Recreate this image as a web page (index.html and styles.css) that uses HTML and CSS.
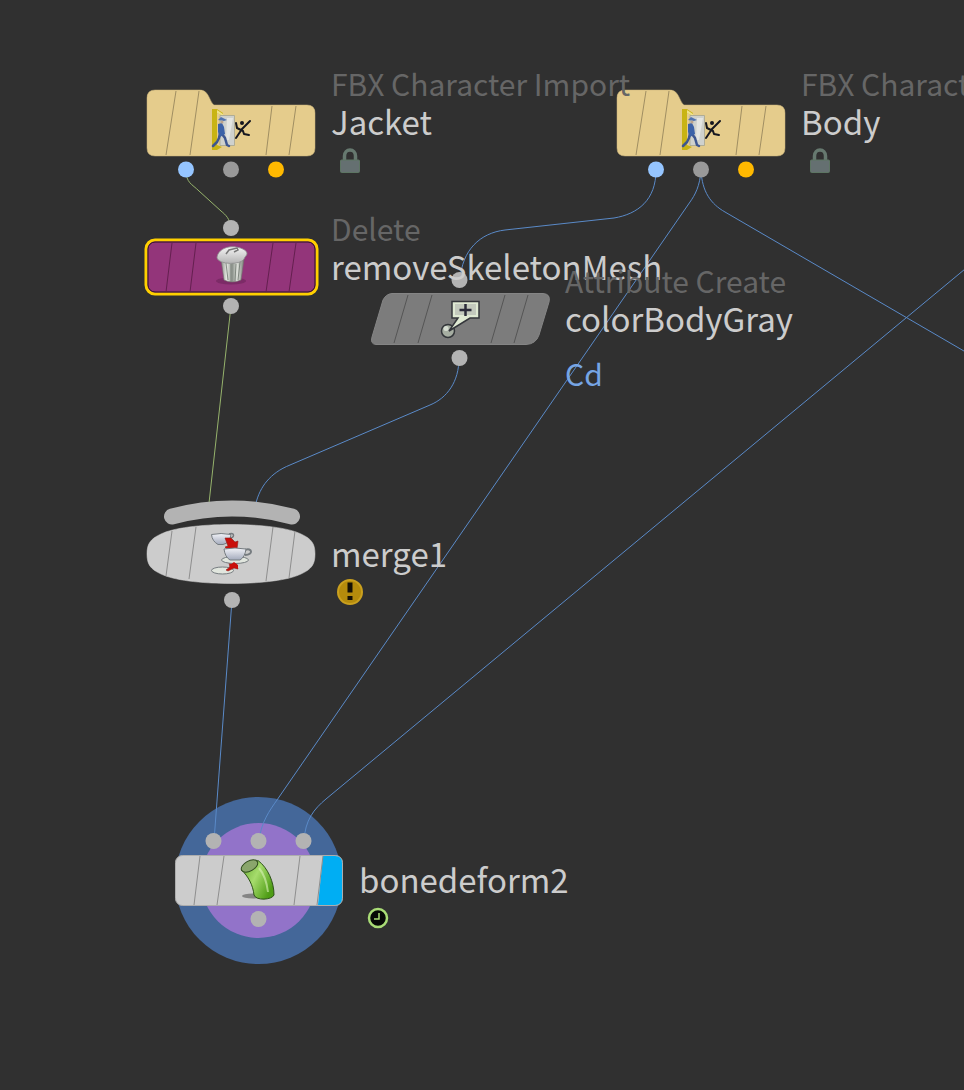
FILE: index.html
```html
<!DOCTYPE html>
<html lang="en">
<head>
    <meta charset="UTF-8">
    <meta name="viewport" content="width=device-width, initial-scale=1.0">
    <title>Network Editor</title>
    <link rel="stylesheet" href="styles.css">
</head>
<body>
    <!-- shared shapes -->
    <svg class="defs" aria-hidden="true">
        <defs>
            <linearGradient id="metal">
                <stop offset="0" stop-color="#8c918a"/>
                <stop offset=".25" stop-color="#e6e9e3"/>
                <stop offset=".5" stop-color="#8f958e"/>
                <stop offset=".7" stop-color="#dfe2dc"/>
                <stop offset="1" stop-color="#7a8078"/>
            </linearGradient>
            <linearGradient id="lid" x2="0" y2="1">
                <stop offset="0" stop-color="#f4f4f4"/>
                <stop offset="1" stop-color="#b4b4b4"/>
            </linearGradient>
            <linearGradient id="cup" x2="0" y2="1">
                <stop offset="0" stop-color="#f2f3f8"/>
                <stop offset="1" stop-color="#a3aabc"/>
            </linearGradient>
            <linearGradient id="tube" x2="1" y2=".6">
                <stop offset="0" stop-color="#63a82c"/>
                <stop offset=".5" stop-color="#a6dc6c"/>
                <stop offset="1" stop-color="#4f9d16"/>
            </linearGradient>
            <symbol id="fbxNode" viewBox="0 0 172 116">
                <path fill="#e5cc8c" stroke="#c9b27a" stroke-width=".5" d="M2 32Q2 24 10 24H55C64 24 64 35 69 39H162Q170 39 170 47V82Q170 90 162 90H10Q2 90 2 82Z"/>
                <path class="stripe tan" d="M31 25L21 89M54 25L45 89M127 40L121 89M151 40L144 89"/>
                <path fill="#c9b414" d="M67 43h5l6 4v3l-6-3v32l5 2-5 3h-5z"/>
                <path fill="#efe28a" d="M72 44l6 4v2l-6-3z"/>
                <path fill="#cfd1cd" stroke="#a5a590" stroke-width=".8" d="M75 49.500h14.500v30H75z"/>
                <path fill="#e4e5e2" d="M82 52h6l-4 22h-3z"/>
                <path fill="none" stroke="#3e568f" stroke-width="2.500" stroke-linejoin="round" stroke-linecap="round" d="M75 67l-1 5-2 4-4 4M77 68l3 4 2 7 2 1"/>
                <path fill="#3c62a8" d="M73 58l4-1 2 4 1 7-5 3-2-5z"/>
                <path fill="#5273b0" d="M73 54l3-3 4 2 2 1-3 1z"/>
                <circle cx="77" cy="56" r="1.500" fill="#b9a28c"/>
                <path fill="none" stroke="#15161f" stroke-width="2" stroke-linecap="round" stroke-linejoin="round" d="M105 55L97 63L91 72M91 57l1 5 6 3 1 3 5 1"/>
                <circle cx="97" cy="57" r="2" fill="#15161f"/>
                <circle cx="41" cy="103.500" r="8" fill="#95c5ff"/>
                <circle cx="86" cy="103.500" r="8" fill="#999"/>
                <circle cx="131" cy="103.500" r="8" fill="#ffb900"/>
            </symbol>
            <symbol id="lock" viewBox="0 0 38 38">
                <path fill="none" stroke="#66796f" stroke-width="3.500" d="M13.500 18v-4a5.500 6 0 0 1 11 0v4"/>
                <rect x="9.500" y="18" width="19" height="12.500" rx="1" fill="#657071" stroke="#5d7563"/>
            </symbol>
        </defs>
    </svg>

    <main class="network">
        <div class="ring"></div>

        <svg class="wires" aria-hidden="true">
            <path class="green" d="M186 170C186 183 192 184 199 191L221 211C226 215 230 219 231 228"/>
            <path class="green" d="M231 306L209 503"/>
            <path d="M656 170C656 200 638 214 614 218L505 230C480 233 462 250 460 280"/>
            <path d="M459 358C459 382 447 398 430 405L290 465C270 473 260 487 256 503"/>
            <path d="M701 170C700 186 695 195 690 202L277 800C270 810 261 822 259 841"/>
            <path d="M701 170C702 192 711 204 725 212L1208 493"/>
            <path d="M1205 70L326 799C314 809 305 820 304 841"/>
            <path d="M232 600L214 841"/>
        </svg>

        <div class="node jacket">
            <svg class="shape fbx"><use href="#fbxNode"/></svg>
            <div class="label">
                <div class="type">FBX Character Import</div>
                <div class="name">Jacket</div>
                <svg class="badge"><use href="#lock"/></svg>
            </div>
        </div>

        <div class="node body">
            <svg class="shape fbx"><use href="#fbxNode"/></svg>
            <div class="label">
                <div class="type">FBX Character Import</div>
                <div class="name">Body</div>
                <svg class="badge"><use href="#lock"/></svg>
            </div>
        </div>

        <div class="node delete">
            <svg class="shape" viewBox="0 0 172 104">
                <rect x="1" y="29" width="171" height="54" rx="9" fill="#93357a" stroke="#ffd000" stroke-width="3"/>
                <rect x="3" y="31" width="167" height="50" rx="7" fill="none" stroke="#2a1026"/>
                <path class="stripe plum" d="M27 32L21 81M51 32L45 81M128 32L121 81M151 32L144 81"/>
                <ellipse cx="86" cy="70" rx="15" ry="3.500" fill="#6d255a" opacity=".6"/>
                <path fill="url(#metal)" stroke="#73706f" stroke-width=".6" d="M76 48L79 69Q87 73 96 69L99 48Z"/>
                <path fill="none" stroke="#6f766e" stroke-width=".8" d="M81 52l2 17M86 53v18M91 53l-1 17M95 51l-2 18"/>
                <path fill="url(#lid)" stroke="#8e8e8e" stroke-width=".8" d="M72 47C72 42 77 37 84 36C92 35 101 38 102 42C102 45 100 45 99 48C96 54 74 54 72 47Z"/>
                <path fill="none" stroke="#777" stroke-width="1.500" d="M81 43l3-4 8-2 1 2-4 2"/>
                <circle cx="86" cy="17" r="8" fill="#b3b3b3"/>
                <circle cx="86" cy="95" r="8" fill="#b3b3b3"/>
            </svg>
            <div class="label">
                <div class="type">Delete</div>
                <div class="name">removeSkeletonMesh</div>
            </div>
        </div>

        <div class="node attrib">
            <svg class="shape" viewBox="0 0 180 104">
                <path fill="#7c7c7c" stroke="#858585" d="M21 30.500H172Q180 31 178 39L168 72Q165 81 155 81.500H5Q-1 81 1 74L12 37Q15 31 21 30.500Z"/>
                <path class="stripe gray" d="M37 32L23 80M61 32L47 80M134 32L120 80M157 32L143 80"/>
                <circle cx="77" cy="68" r="6.500" fill="#a6aea2" stroke="#33363a" stroke-width="1.500"/>
                <circle cx="75" cy="65.500" r="2.500" fill="#d6ddd2"/>
                <path fill="#dfe9d3" stroke="#34363b" stroke-width="1.500" d="M81 38.500H108V55H99L78 68L87 55H81Z"/>
                <path fill="#c3c9bd" d="M84 41h21v11H84z"/>
                <path fill="none" stroke="#2b2b3a" stroke-width="2.500" d="M94.500 41v12M88.500 47h12"/>
                <circle cx="88.500" cy="17" r="8" fill="#b3b3b3"/>
                <circle cx="88.500" cy="95" r="8" fill="#b3b3b3"/>
            </svg>
            <div class="label">
                <div class="type">Attribute Create</div>
                <div class="name">colorBodyGray</div>
                <div class="attr">Cd</div>
            </div>
        </div>

        <div class="node merge">
            <svg class="shape" viewBox="0 0 172 112">
                <path fill="none" stroke="#b3b3b3" stroke-width="16" stroke-linecap="round" d="M27 18.500Q87 2.500 147 18.500"/>
                <path fill="#ccc" stroke="#d4d4d4" stroke-width=".5" d="M86 26.500C117 26.500 144 30 156 36C167 41 170 46 170 56C170 66 167 71 156 76C144 82 117 85.500 86 85.500C55 85.500 28 82 16 76C5 71 2 66 2 56C2 46 5 41 16 36C28 30 55 26.500 86 26.500Z"/>
                <path class="stripe light" d="M27 33L21 78M51 29L44 81M128 29L121 83M150 33L144 80"/>
                <g stroke="#767c80">
                    <path fill="none" stroke-width="1.500" d="M84 36c6-2 6 4 0 4"/>
                    <path fill="url(#cup)" d="M66.500 36.500Q76 34.500 86 36.500Q85 45 78 46.500H73Q67 43 66.500 36.500Z"/>
                    <ellipse cx="77.500" cy="72.500" rx="11" ry="3.500" fill="#e1e6de"/>
                </g>
                <path fill="#c90f0b" stroke="#8e1d18" stroke-width=".6" d="M80 40l6 0 4 4 3-1-1 8-9 1-3-3 3-1zM81 72l4-3-1-4 6-3 3 9-4-1-6 3z"/>
                <g stroke="#767c80">
                    <ellipse cx="90" cy="62" rx="13.500" ry="3.500" fill="#e1e6de"/>
                    <path fill="none" stroke-width="2" d="M100 52c7-3 9 5 0 5"/>
                    <path fill="url(#cup)" d="M79 51Q90 49 101 51Q100 59 95 62H85Q80 59 79 51Z"/>
                </g>
                <path fill="#c90f0b" d="M85 67l4-3 4 3 0 4-4-2-5 3z"/>
                <circle cx="87" cy="102" r="8" fill="#b3b3b3"/>
            </svg>
            <div class="label">
                <div class="name">merge1</div>
                <svg class="badge" viewBox="0 0 38 38">
                    <circle cx="19" cy="18" r="12" fill="#b48b0c" stroke="#caa01e" stroke-width="2"/>
                    <path fill="#141005" d="M16.500 8.500h5v10h-5zM16.500 22h5v4h-5z"/>
                </svg>
            </div>
        </div>

        <div class="node bone">
            <svg class="shape" viewBox="0 0 172 100">
                <rect x="2.500" y="25.500" width="167" height="50" rx="7" fill="#ccc" stroke="#adadad"/>
                <path fill="#00aef3" d="M150 26H162Q169 26 169 33V68Q169 75 162 75H145Z"/>
                <path class="stripe light" d="M27 26L21 75M51 26L44 75M127 26L121 75M150 26L144 75"/>
                <ellipse cx="80" cy="66" rx="11" ry="2.500" fill="#555" opacity=".6"/>
                <path fill="url(#tube)" stroke="#2d5218" d="M68.500 40C75 46 80 55 81 65C83 71 99 70 101 65C101 52 95 38 85 30.500Z"/>
                <path fill="none" stroke="#d8f2b8" stroke-width="2" opacity=".6" d="M86 38C91 44 94 54 95 62"/>
                <ellipse cx="76.500" cy="36" rx="9" ry="5" transform="rotate(-29 76.500 36)" fill="#8aa66c" stroke="#2d4a1c"/>
                <circle cx="40.500" cy="11" r="8" fill="#b3b3b3"/>
                <circle cx="85.500" cy="11" r="8" fill="#b3b3b3"/>
                <circle cx="130.500" cy="11" r="8" fill="#b3b3b3"/>
                <circle cx="85.500" cy="89" r="8" fill="#b3b3b3"/>
            </svg>
            <div class="label">
                <div class="name">bonedeform2</div>
                <svg class="badge" viewBox="0 0 38 38">
                    <circle cx="19" cy="18" r="9" fill="#060806" stroke="#a9dc76" stroke-width="2.500"/>
                    <path fill="none" stroke="#a9dc76" stroke-width="1.500" d="M20 13v6h-5"/>
                </svg>
            </div>
        </div>
    </main>
</body>
</html>
```
FILE: styles.css
```css
body {
    margin: 0;
    background-color: #303030;
    font-family: "Noto Sans CJK SC", "Noto Sans", sans-serif;
}

.defs {
    position: absolute;
    width: 0;
    height: 0;
}

.network {
    position: relative;
    min-height: 100vh;
    overflow: hidden;
}

/* wires run above the display ring and below the nodes */
.wires {
    position: absolute;
    top: 0;
    left: 0;
    width: 100%;
    height: 100%;
    fill: none;
    stroke: #5a8ac8;
    stroke-width: 1;
}

.wires .green {
    stroke: #96b36c;
}

.ring {
    position: absolute;
    left: 201px;
    top: 823px;
    width: 115px;
    height: 115px;
    border-radius: 50%;
    background-color: #9273c9;
    box-shadow: 0 0 0 26px #446799;
}

.node {
    position: absolute;
    display: flex;
    align-items: flex-start;
    gap: 14px;
}

.jacket { left: 145px; top: 66px; }
.body { left: 615px; top: 66px; }
.delete { left: 145px; top: 211px; }
.attrib { left: 371px; top: 263px; }
.merge { left: 145px; top: 498px; }
.bone { left: 173px; top: 830px; }

.shape {
    display: block;
    flex: none;
    width: 172px;
    overflow: visible;
}

.fbx { height: 116px; }
.attrib .shape { width: 180px; }

.stripe {
    fill: none;
    stroke-width: 1;
}

.tan { stroke: #a08e62; }
.plum { stroke: #64204f; }
.gray { stroke: #555; }
.light { stroke: #8e8e8e; }

/* labels stay readable over any node they reach */
.label {
    position: relative;
    z-index: 2;
    white-space: nowrap;
}

.merge .label { padding-top: 34px; }
.bone .label { padding-top: 28px; }

.type {
    color: #666;
    font-size: 30px;
    line-height: 34px;
}

.name {
    color: #ccc;
    font-size: 33px;
    line-height: 42px;
}

.attr {
    margin-top: 16px;
    color: #76a5e4;
    font-size: 30px;
    line-height: 36px;
}

.badge {
    display: block;
    width: 38px;
    height: 38px;
}
```
